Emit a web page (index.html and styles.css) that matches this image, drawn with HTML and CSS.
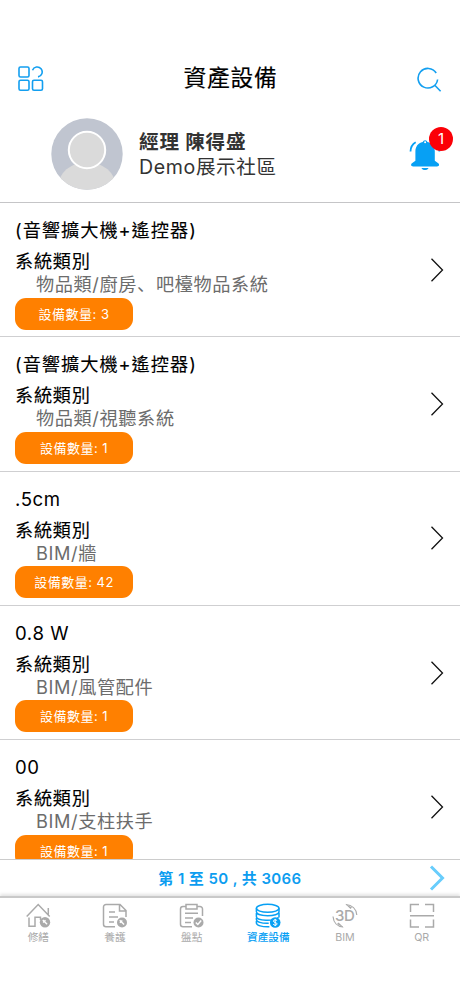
FILE: index.html
```html
<!DOCTYPE html>
<html lang="zh-Hant">
<head>
<meta charset="utf-8">
<meta name="viewport" content="width=device-width, initial-scale=1">
<title>資產設備</title>
<link rel="stylesheet" href="styles.css">
</head>
<body>
<div class="app">
  <header class="topbar">
    <svg class="menu-icon" viewBox="0 0 26 26"><rect x="1" y="1" width="10" height="10" rx="1.5"/><path d="M14.5 4.2A5 5 0 1 1 20 10.9"/><rect x="1" y="14.3" width="10" height="10" rx="1.5"/><rect x="14.5" y="14.3" width="10" height="10" rx="1.5"/></svg>
    <h1>資產設備</h1>
    <svg class="search-icon" viewBox="0 0 26 26"><path d="M19.2 6A9.8 9.8 0 1 0 20.6 12.5M17.3 17.8L23.6 24.2"/></svg>
  </header>
  <section class="profile">
    <svg class="avatar" viewBox="0 0 72 72"><defs><clipPath id="disc"><circle cx="36" cy="36" r="35.7"/></clipPath></defs><g clip-path="url(#disc)"><path fill="#c0c5d0" d="M0 0h72v72H0z"/><ellipse cx="36" cy="69" rx="29" ry="25" fill="#dadada"/></g><circle cx="36" cy="32" r="18.2" fill="#dadada" stroke="#fff" stroke-width="2"/></svg>
    <div class="who"><div class="name">經理 陳得盛</div><div class="site">Demo展示社區</div></div>
    <div class="bell">
      <svg viewBox="0 0 32 34"><path class="bell-body" d="M13.700 5.100a2.500 2.500 0 0 1 4.800 0c4.800 1.100 7.300 4.700 7.300 9.500v9.200l3.100 2.200c2 1.300 1.300 3.400-.8 3.400h-24c-2.100 0-2.800-2.100-.8-3.400l3.100-2.200v-9.200c0-4.800 2.500-8.400 7.300-9.500zM12.500 31h7c-.9 2.800-6.100 2.800-7 0z"/><circle cx="16.100" cy="5.200" r="1" fill="#fff"/><path class="bell-ring" d="M1.500 14.500C1.600 10.500 3.500 7 6.700 5.200M30.400 14.500c-.1-4-1.700-7.300-4.900-9.300"/></svg>
      <span class="badge">1</span>
    </div>
  </section>
  <main class="list">
    <article class="item"><div class="info"><h2 class="cjk">(音響擴大機+遙控器)</h2><h3>系統類別</h3><p>物品類/廚房<span class="comma" lang="zh-Hans">、</span>吧檯物品系統</p><span class="count">設備數量: 3</span></div><svg class="chevron" viewBox="0 0 14 26"><path d="M1.5 1.7L12.5 13L1.5 24.3"/></svg></article>
    <article class="item"><div class="info"><h2 class="cjk">(音響擴大機+遙控器)</h2><h3>系統類別</h3><p>物品類/視聽系統</p><span class="count">設備數量: 1</span></div><svg class="chevron" viewBox="0 0 14 26"><path d="M1.5 1.7L12.5 13L1.5 24.3"/></svg></article>
    <article class="item"><div class="info"><h2>.5cm</h2><h3>系統類別</h3><p>BIM/牆</p><span class="count">設備數量: 42</span></div><svg class="chevron" viewBox="0 0 14 26"><path d="M1.5 1.7L12.5 13L1.5 24.3"/></svg></article>
    <article class="item"><div class="info"><h2>0.8 W</h2><h3>系統類別</h3><p>BIM/風管配件</p><span class="count">設備數量: 1</span></div><svg class="chevron" viewBox="0 0 14 26"><path d="M1.5 1.7L12.5 13L1.5 24.3"/></svg></article>
    <article class="item"><div class="info"><h2>00</h2><h3>系統類別</h3><p>BIM/支柱扶手</p><span class="count">設備數量: 1</span></div><svg class="chevron" viewBox="0 0 14 26"><path d="M1.5 1.7L12.5 13L1.5 24.3"/></svg></article>
  </main>
  <div class="pager"><span>第 1 至 50 , 共 3066</span><svg viewBox="0 0 16 26"><path d="M2 1.500L13.500 13L2 24.500"/></svg></div>
  <nav class="tabs">
    <a class="tab"><svg viewBox="0 0 26 26"><path d="M1.700 13.500L13.200 1.500L24.700 13.500M23.300 5v7M4 14.500V23.300H10V14.200H15.500V17"/><circle class="solid" cx="20" cy="19.300" r="5.200"/><path class="mark" d="M17.800 17l4.300 4.300M20.500 17.200l-2.400 2.300"/></svg><span>修繕</span></a>
    <a class="tab"><svg viewBox="0 0 26 26"><path d="M13 23.700H4a2.500 2.500 0 0 1-2.500-2.500V4A2.500 2.500 0 0 1 4 1.500H18L24 7.500V14M17.500 2v6H24M7 9h6M7 14h9M7 19h5"/><circle class="solid" cx="20" cy="19.500" r="5"/><path class="mark" d="M17.700 17.200l4.400 4.400M20.300 17.500l-2.400 2.200"/></svg><span>養護</span></a>
    <a class="tab"><svg viewBox="0 0 26 26"><path d="M7 3.500H4A2.500 2.500 0 0 0 1.500 6v15.200A2.500 2.500 0 0 0 4 23.700h9M18 3.500h3A2.500 2.500 0 0 1 23.500 6v7M7 1.500h11v4.500H7zM6 10.300h13M6 15h8M6 19.500h6"/><circle class="solid" cx="19.500" cy="19.500" r="5"/><path class="mark" d="M16.800 19.500l2 2 3.400-4"/></svg><span>盤點</span></a>
    <a class="tab active"><svg viewBox="0 0 26 26"><ellipse cx="12.700" cy="5.300" rx="11.300" ry="4"/><path d="M1.400 5.300v3.500c0 5.200 22.600 5.200 22.600 0V5.300M1.400 10v3.500c0 4.700 18 5 22 1M24 10v4.500M1.400 14.700v1.800c0 2.400 5 4 12.300 3.700M1.400 18v2c0 2.400 5.500 4 13 3.700"/><circle class="solid" cx="20.200" cy="19.500" r="5.300"/><path class="mark thin" d="M22.100 17.700c-1-1.500-3.800-1-3.700.5.100 1.600 3.700 1 3.700 2.700-.1 1.600-3 1.900-3.900.3M20.200 15.900v7.200"/></svg><span>資產設備</span></a>
    <a class="tab"><svg viewBox="0 0 26 26"><text x="12.700" y="18.300">3D</text><path class="fine" d="M14 1.500C20 2 24.300 6 24.800 12M11 24C5.500 23.500 1.500 19.500 1 13.500"/><path class="solid" d="M13 .8l7 3.600-1.500 1.600zM12 24.700l-7-3.600 1.500-1.600z"/></svg><span>BIM</span></a>
    <a class="tab"><svg viewBox="0 0 26 26"><path d="M1.500 9V1.500H10M16 1.500h8.500V9M1.500 16.500V24H10M16 24h8.500V16.500M1 12.800h24"/></svg><span>QR</span></a>
  </nav>
</div>
</body>
</html>
```
FILE: styles.css
```css
* { box-sizing: border-box; }
body { margin: 0; background: #fff; font-family: Inter, "Noto Sans CJK TC", sans-serif; color: #000; }
h1, h2, h3, p { margin: 0; font-weight: 400; }
svg { display: block; fill: none; flex: none; }
.app { width: 460px; height: 996px; display: flex; flex-direction: column; overflow: hidden; padding-top: 54px; }

.topbar { height: 50px; display: flex; align-items: center; justify-content: space-between; padding: 0 17px 0 18px; flex: none; }
.topbar svg { width: 26px; height: 26px; stroke: #139ff0; stroke-width: 1.6; }
.topbar .search-icon { margin-top: 2px; }
.topbar h1 { font-size: 22.8px; letter-spacing: .7px; line-height: 48px; padding-bottom: 2px; -webkit-text-stroke: .15px #000; }

.profile { height: 99px; flex: none; display: flex; align-items: center; padding: 1px 6px 0 51px; border-bottom: 1px solid #c5c5c7; }
.avatar { width: 72px; height: 72px; }
.who { margin-left: 16px; padding-top: 2px; flex: 1; color: #333; font-size: 19.6px; line-height: 25px; letter-spacing: .6px; }
.name { font-weight: 700; letter-spacing: .8px; }
.bell { position: relative; width: 45px; height: 52px; padding-top: 9px; }
.bell svg { width: 32px; height: 34px; }
.bell-body { fill: #07a0f4; }
.bell-ring { stroke: #07a0f4; stroke-width: 1.8; }
.badge { position: absolute; right: 1px; top: -1px; width: 24px; height: 24px; border-radius: 50%; background: #fb0007; color: #fff; font-size: 15px; line-height: 24px; text-align: center; }

.list { height: 656px; flex: none; overflow: hidden; }
.item { height: 134.3px; display: flex; align-items: center; justify-content: space-between; padding: 0 16px 0 15px; border-bottom: 1px solid #cfcfd1; }
.info { align-self: flex-start; padding-top: 12px; }
.info h2, .info h3, .info p { font-size: 18.2px; letter-spacing: .6px; white-space: nowrap; }
.info h2 { line-height: 30px; font-size: 18.6px; }
.info h2.cjk { font-size: 18.2px; letter-spacing: 1px; -webkit-text-stroke: .1px #000; }
.info h3 { line-height: 32px; letter-spacing: .7px; -webkit-text-stroke: .12px #000; }
.info p { line-height: 14px; color: #6c6c6c; padding-left: 21px; margin-bottom: 6.5px; }
.comma { font-family: "Noto Sans CJK SC", sans-serif; line-height: 1px; }
.count { display: block; width: 118px; height: 32px; border-radius: 11px; background: #ff8000; color: #fff; font-size: 13px; letter-spacing: .5px; line-height: 32px; text-align: center; }
.chevron { width: 14px; height: 26px; stroke: #111; stroke-width: 1.3; }

.pager { height: 37px; flex: none; display: grid; grid-template-columns: 1fr auto 1fr; align-items: center; border-top: 1px solid #ccc; padding: 0 15px; color: #0c9df0; font-size: 15px; letter-spacing: .4px; font-weight: 600; line-height: 20px; }
.pager span { grid-column: 2; padding-top: 1px; }
.pager svg { justify-self: end; width: 16px; height: 26px; stroke: #68cdfc; stroke-width: 3; }

.tabs { height: 100px; flex: none; display: flex; border-top: 2px solid #c9c9c9; box-shadow: 0 -2px 3px #e4e4e4; padding-top: 5px; }
.tab { flex: 1; display: flex; flex-direction: column; align-items: center; color: #aaa; font-size: 10.7px; line-height: 17px; }
.tab svg { width: 26px; height: 26px; stroke: currentColor; stroke-width: 1.5; }
.tab text { fill: currentColor; stroke: none; font-size: 15px; letter-spacing: -.5px; text-anchor: middle; font-weight: 500; }
.tab.active { color: #07a0f4; font-weight: 500; }
.tab .solid { fill: currentColor; stroke: none; }
.mark { stroke: #fff; stroke-width: 1.4; }
.thin { stroke-width: 1; }
.fine { stroke-width: 1.2; }
```
